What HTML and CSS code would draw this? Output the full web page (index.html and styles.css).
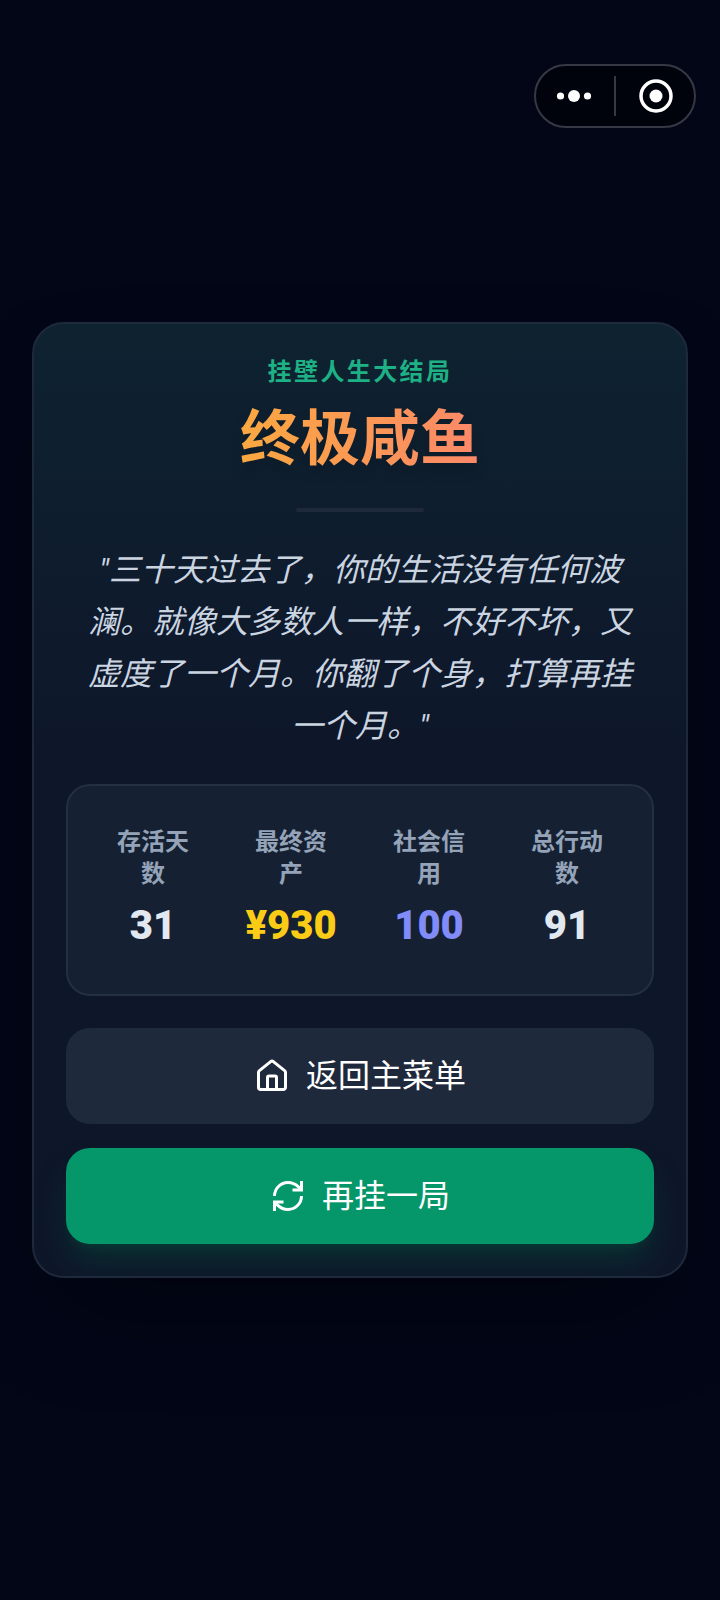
FILE: index.html
```html
<!DOCTYPE html>
<html lang="zh-CN">
<head>
<meta charset="utf-8">
<meta name="viewport" content="width=device-width, initial-scale=1">
<title>终极咸鱼</title>
<link rel="stylesheet" href="styles.css">
</head>
<body>
<div class="capsule">
  <button class="capsule-btn" type="button" aria-label="更多">
    <svg width="36" height="14" viewBox="0 0 36 14" fill="currentColor"><circle cx="4.500" cy="7" r="3.600"/><circle cx="18" cy="7" r="6"/><circle cx="31.500" cy="7" r="3.600"/></svg>
  </button>
  <span class="capsule-line"></span>
  <button class="capsule-btn" type="button" aria-label="关闭">
    <svg width="34" height="34" viewBox="0 0 34 34"><circle cx="17" cy="17" r="15" fill="none" stroke="currentColor" stroke-width="3.500"/><circle cx="17" cy="17" r="6.500" fill="currentColor"/></svg>
  </button>
</div>
<main class="screen">
  <section class="card">
    <p class="tag">挂壁人生大结局</p>
    <h1 class="title">终极咸鱼</h1>
    <div class="divider"></div>
    <p class="story">"三十天过去了，你的生活没有任何波澜。就像大多数人一样，不好不坏，又虚度了一个月。你翻了个身，打算再挂一个月。"</p>
    <dl class="stats">
      <div class="stat"><dt class="stat-label">存活天数</dt><dd class="stat-value">31</dd></div>
      <div class="stat"><dt class="stat-label">最终资产</dt><dd class="stat-value stat-value--money">¥930</dd></div>
      <div class="stat"><dt class="stat-label">社会信用</dt><dd class="stat-value stat-value--credit">100</dd></div>
      <div class="stat"><dt class="stat-label">总行动数</dt><dd class="stat-value">91</dd></div>
    </dl>
    <div class="actions">
      <button class="btn" type="button">
        <svg class="icon" viewBox="0 0 24 24"><path d="M15 21v-8a1 1 0 0 0-1-1h-4a1 1 0 0 0-1 1v8"/><path d="M3 9.600a1.500 1.500 0 0 1 .600-1.200l7.500-6a1.500 1.500 0 0 1 1.800 0l7.500 6a1.500 1.500 0 0 1 .600 1.200v9.900a1.500 1.500 0 0 1-1.500 1.500H4.500a1.500 1.500 0 0 1-1.500-1.500z"/></svg>
        返回主菜单
      </button>
      <button class="btn btn--primary" type="button">
        <svg class="icon icon--sharp" viewBox="0 0 24 24"><path d="M3 12a9 9 0 0 1 9-9 9.750 9.750 0 0 1 6.740 2.740L21 8"/><path d="M21 2v6h-6"/><path d="M21 12a9 9 0 0 1-9 9 9.750 9.750 0 0 1-6.740-2.740L3 16"/><path d="M9 16H3v6"/></svg>
        再挂一局
      </button>
    </div>
  </section>
</main>
</body>
</html>
```
FILE: styles.css
```css
* {
  box-sizing: border-box;
  margin: 0;
}

body {
  background: #020617;
  color: #e2e8f0;
  font-family: Roboto, "Noto Sans CJK SC", sans-serif;
}

.capsule {
  position: absolute;
  top: 64px;
  right: 24px;
  display: flex;
  align-items: center;
  gap: 2px;
  width: 162px;
  height: 64px;
  border: 2px solid #363845;
  border-radius: 32px;
  background: #01030c;
}

.capsule-btn {
  flex: 1;
  display: flex;
  align-items: center;
  justify-content: center;
  height: 100%;
  padding: 0;
  border: 0;
  background: none;
  color: #fff;
}

.capsule-line {
  width: 2px;
  height: 40px;
  background: #363845;
}

.screen {
  display: flex;
  align-items: center;
  justify-content: center;
  min-height: 100vh;
  padding: 32px;
}

.card {
  width: 100%;
  padding: 32px;
  border: 2px solid #1e293b;
  border-radius: 32px;
  background: linear-gradient(to bottom, rgba(16, 185, 129, 0.07), rgba(16, 185, 129, 0) 45%) #0e172a;
  box-shadow: 0 50px 100px -24px rgba(0, 0, 0, 0.4);
  text-align: center;
  overflow: hidden;
}

.tag {
  color: #1eb185;
  font-size: 24px;
  font-weight: 700;
  line-height: 32px;
  letter-spacing: 2.4px;
}

.title {
  margin-top: 12px;
  background: linear-gradient(to right, #fbbf24, #fb7185);
  background-clip: text;
  -webkit-background-clip: text;
  color: transparent;
  font-size: 60px;
  font-weight: 700;
  line-height: 80px;
  filter: drop-shadow(0 8px 6px rgba(0, 0, 0, 0.15));
}

.divider {
  width: 128px;
  height: 4px;
  margin: 28px auto 32px;
  border-radius: 2px;
  background: #1e293b;
}

.story {
  padding: 0 16px;
  color: #cbd5e1;
  font-size: 32px;
  font-style: italic;
  line-height: 52px;
}

.stats {
  display: grid;
  grid-template-columns: repeat(4, 1fr);
  gap: 32px;
  margin-top: 32px;
  padding: 40px 32px;
  border: 2px solid #242f40;
  border-radius: 24px;
  background: #152132;
}

.stat-label {
  padding: 0 8px;
  color: #94a3b8;
  font-size: 24px;
  font-weight: 700;
  line-height: 32px;
}

.stat-value {
  margin: 8px -8px 0;
  color: #e2e8f0;
  font-size: 40px;
  font-weight: 900;
  line-height: 56px;
}

.stat-value--money {
  color: #facc15;
}

.stat-value--credit {
  color: #818cf8;
}

.actions {
  display: flex;
  flex-direction: column;
  gap: 24px;
  margin-top: 32px;
}

.btn {
  display: flex;
  align-items: center;
  justify-content: center;
  gap: 16px;
  height: 96px;
  border: 0;
  border-radius: 24px;
  background: #1e293b;
  color: #fff;
  font-family: inherit;
  font-size: 32px;
  line-height: 48px;
}

.btn--primary {
  background: #059669;
  box-shadow: 0 20px 30px -6px rgba(6, 78, 59, 0.5), 0 8px 12px -8px rgba(6, 78, 59, 0.5);
}

.icon {
  width: 36px;
  height: 36px;
  fill: none;
  stroke: currentColor;
  stroke-width: 2;
  stroke-linecap: round;
  stroke-linejoin: round;
}

.icon--sharp {
  stroke-linecap: butt;
  stroke-linejoin: miter;
}
```
